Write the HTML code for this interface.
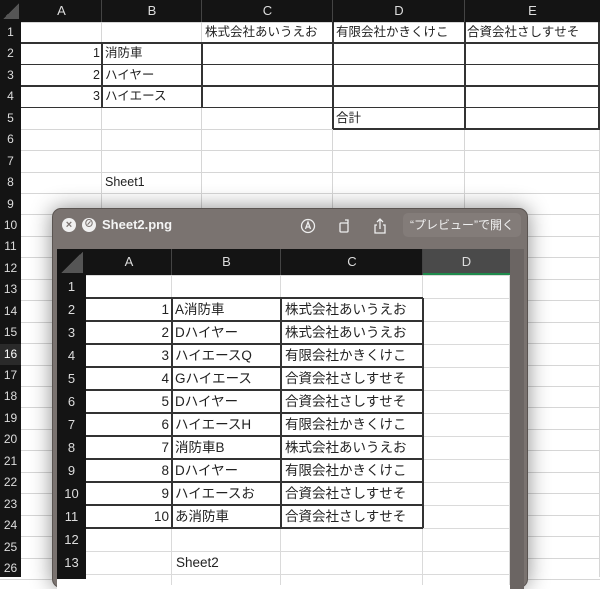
<!DOCTYPE html>
<html><head><meta charset="utf-8"><style>
*{margin:0;padding:0;box-sizing:border-box}
body{width:600px;height:577px;overflow:hidden;background:#fff;position:relative;font-family:"Liberation Sans","Noto Sans CJK JP",sans-serif;color:#222}
.a{position:absolute;white-space:nowrap}
.h{background:#141414;color:#ddd;text-align:center;font-size:13px}
.t{font-size:13px}
</style></head><body>
<div id="root"></div>
<script>
var R=document.getElementById('root'),H='';
function d(x,y,w,h,st,txt){H+='<div class="a" style="left:'+x+'px;top:'+y+'px;width:'+w+'px;height:'+h+'px;'+(st||'')+'">'+(txt||'')+'</div>';}
// outer sheet
var cx=[21,102,202,333,465,600],cn=['A','B','C','D','E'];
var rh=21.44,top0=22;
function ry(i){return top0+(i-1)*rh;}
// grid lines
for(var i=1;i<=27;i++)d(0,ry(i)-0.5,600,1,'background:#d6d6d6');
for(var j=0;j<5;j++)d(cx[j+1]-1,22,1,555,'background:#d6d6d6');
d(0,0,600,22,'background:#141414');
d(0,0,21,577,'background:#141414');
d(3,3,16,16,'background:linear-gradient(135deg,transparent 50%,#555 50%)');
for(var j=0;j<5;j++){d(cx[j],0,cx[j+1]-cx[j],22,'line-height:22px;','<div class="h" style="line-height:22px">'+cn[j]+'</div>');if(j>0)d(cx[j]-1,0,1,22,'background:#444');}
for(var i=1;i<=26;i++){d(0,ry(i),21,rh,'color:'+(i==16?'#fff;background:#2a2a2a':'#ddd')+';font-size:12px;text-align:center;line-height:'+rh+'px',i);}
// borders outer table
var B='background:#333';
// rows 1-4 cols B..E, C..E at row1
d(102,ry(2)-1,363+135-2,1.5,B);
for(var i=3;i<=5;i++)d(21,ry(i)-1,579,1.5,B);
d(21,ry(2)-1,81,1.5,B);
d(333,ry(6)-1,267,1.5,B);
d(101,ry(2),1.5,rh*3,B);
d(201,ry(2),1.5,rh*3,B);
d(332,ry(1),1.5,rh*5,B);d(464,ry(1),1.5,rh*5,B);d(598,ry(1),1.5,rh*5,B);
d(202,ry(1),1,1,'');
function tx(x,y,s,al,w){d(x,y,w||130,rh,'font-size:12.5px;line-height:'+rh+'px;text-align:'+(al||'left'),s);}
tx(205,ry(1),'株式会社あいうえお');tx(336,ry(1),'有限会社かきくけこ');tx(467,ry(1),'合資会社さしすせそ');
tx(21,ry(2),'1','right',79);tx(21,ry(3),'2','right',79);tx(21,ry(4),'3','right',79);
tx(105,ry(2),'消防車');tx(105,ry(3),'ハイヤー');tx(105,ry(4),'ハイエース');
tx(336,ry(5),'合計');tx(105,ry(8),'Sheet1');
// popup shadow
d(52,208,476,380,'background:#7a7370;border-radius:9px;border:1px solid #5a5451;box-shadow:0 0 22px rgba(0,0,0,.45)');
d(62,218,14,14,'border-radius:50%;background:#f0f0f0;color:#7a7370;font-size:11px;font-weight:bold;text-align:center;line-height:14px','×');
d(82,218,14,14,'border-radius:50%;background:#f0f0f0;color:#7a7370;font-size:10px;font-weight:bold;text-align:center;line-height:14px','⊘');
d(102,215,100,20,'color:#f4f4f4;font-weight:bold;font-size:13px;line-height:20px','Sheet2.png');
H+='<svg class="a" style="left:300px;top:217px" width="120" height="18" viewBox="0 0 120 18" fill="none" stroke="#eee" stroke-width="1.3"><circle cx="8" cy="9" r="6.5"/><path d="M5.5 12 L8 5 L10.5 12 M6.3 10 H9.7"/><rect x="40" y="6" width="8" height="9" rx="1"/><path d="M45 3 l3 0 l0 3"/><path d="M77 8 h-2 v8 h10 v-8 h-2 M80 12 V2 M77 5 l3 -3 l3 3"/></svg>';
d(403,213,118,24,'border-radius:5px;background:#837c79;color:#f0f0f0;font-size:12px;text-align:center;line-height:24px','“プレビュー”で開く');
// inner sheet
var ix=[86,172,281,423,510],ih=23,it=275;
d(57,249,467,340,'background:#6b6563');
d(57,249,453,340,'background:#fff');
function iy(i){return it+(i-1)*ih;}
for(var i=1;i<=14;i++)d(86,iy(i)-0.5,424,1,'background:#dadada');
for(var j=1;j<5;j++)d(ix[j]-1,275,1,310,'background:#dadada');
d(57,249,453,26,'background:#141414');
d(57,249,29,330,'background:#141414');
d(61,252,22,21,'background:linear-gradient(135deg,transparent 50%,#555 50%)');
var inn=['A','B','C','D'];
for(var j=0;j<4;j++){d(ix[j],249,ix[j+1]-ix[j],26,'line-height:26px;'+(j==3?'background:#4a4a4a;border-bottom:2px solid #1f8a4c;':''),'<div class="h" style="line-height:26px;background:transparent">'+inn[j]+'</div>');if(j>0)d(ix[j]-1,249,1,26,'background:#444');}
for(var i=1;i<=13;i++)d(57,iy(i),29,ih,'color:#ddd;font-size:13px;text-align:center;line-height:'+ih+'px',i);
for(var i=2;i<=12;i++)d(86,iy(i)-1,337,1.5,B);
d(171,iy(2),1.5,ih*10,B);d(280,iy(2),1.5,ih*10,B);d(422,iy(2),1.5,ih*10,B);
var bb=['A消防車','Dハイヤー','ハイエースQ','Gハイエース','Dハイヤー','ハイエースH','消防車B','Dハイヤー','ハイエースお','あ消防車'];
var cc=['株式会社あいうえお','株式会社あいうえお','有限会社かきくけこ','合資会社さしすせそ','合資会社さしすせそ','有限会社かきくけこ','株式会社あいうえお','有限会社かきくけこ','合資会社さしすせそ','合資会社さしすせそ'];
function it2(x,y,s,al,w){d(x,y,w||140,ih,'font-size:13.5px;line-height:'+ih+'px;text-align:'+(al||'left'),s);}
for(var k=0;k<10;k++){var y=iy(k+2);it2(86,y,''+(k+1),'right',83);it2(175,y,bb[k]);it2(285,y,cc[k]);}
it2(176,iy(13),'Sheet2');
R.innerHTML=H;
</script>
</body></html>
